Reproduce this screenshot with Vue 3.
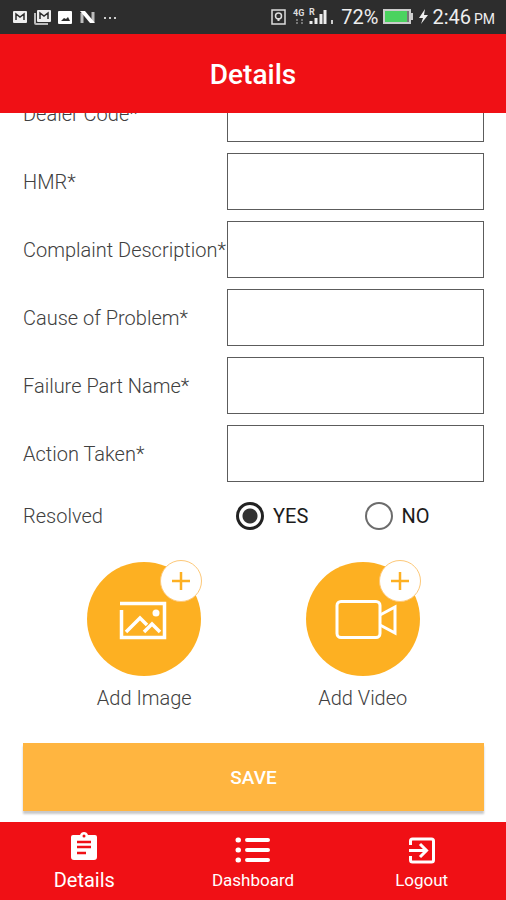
<script setup>
import { ref } from 'vue'

const fields = ref([
  { id: 'dealer-code', label: 'Dealer Code*', value: '' },
  { id: 'hmr', label: 'HMR*', value: '' },
  { id: 'complaint', label: 'Complaint Description*', value: '' },
  { id: 'cause', label: 'Cause of Problem*', value: '' },
  { id: 'part', label: 'Failure Part Name*', value: '' },
  { id: 'action', label: 'Action Taken*', value: '' }
])
const resolved = ref('YES')
</script>

<template>
  <div class="screen">
    <div class="status">
      <div class="status-left">
        <svg width="104" height="16" viewBox="0 0 104 16">
          <rect x="0" y="2" width="14" height="12" rx="1" fill="#eee" />
          <path d="M3 11V5l4 3 4-3v6" fill="none" stroke="#2d2d2d" stroke-width="1.5" />
          <path d="M21 4v10h14v2H23q-2 0-2-2z" fill="#bbb" />
          <path d="M21 4h2v10h-2z" fill="#bbb" />
          <rect x="24" y="1" width="14" height="12" rx="1" fill="#eee" />
          <path d="M27 10V4l4 3 4-3v6" fill="none" stroke="#2d2d2d" stroke-width="1.5" />
          <rect x="45" y="2" width="14" height="13" rx="1" fill="#fff" />
          <path d="M48 12l3-3 2 1 2-2 2 4z" fill="#2d2d2d" />
          <path d="M69 14V4M80 3v10" stroke="#bbb" stroke-width="3" />
          <path d="M67 2h5l10 12h-5z" fill="#fff" />
          <g fill="#ccc">
            <rect x="91" y="8" width="2" height="2" />
            <rect x="96" y="8" width="2" height="2" />
            <rect x="101" y="8" width="2" height="2" />
          </g>
        </svg>
      </div>
      <div class="status-right">
        <svg width="66" height="20" viewBox="0 0 66 20">
          <rect x="1" y="3" width="13" height="14" fill="none" stroke="#ddd" stroke-width="1.5" />
          <circle cx="7.5" cy="9" r="3" fill="none" stroke="#ddd" stroke-width="1.5" />
          <path d="M7.5 11v3" stroke="#ddd" stroke-width="2" />
          <text x="22" y="9" class="tiny">4G</text>
          <text x="38" y="8" class="tiny">R</text>
          <path d="M26 17v-5M31 17v-5" stroke="#777" stroke-width="2" stroke-dasharray="2 1" />
          <path d="M40 17v-3M45 17v-6M50 17V7M54 17V3" stroke="#eee" stroke-width="3" />
          <path d="M61 17v-4" stroke="#ccc" stroke-width="2" />
        </svg>
        <span>72%</span>
        <svg width="46" height="18" viewBox="0 0 46 18">
          <rect x="2" y="2" width="26" height="13" fill="#4bd35f" stroke="#ccc" stroke-width="2" />
          <path d="M25 3h2v11h-2z" fill="#777" />
          <path d="M28 5h3v7h-3z" fill="#ccc" />
          <path d="M43 1l-6 9h4l-2 6 7-9h-4z" fill="#eee" />
        </svg>
        <span class="clock">2:46 <small>PM</small></span>
      </div>
    </div>

    <header class="header"><h1>Details</h1></header>

    <main class="main">
      <form class="form" @submit.prevent>
        <div v-for="field in fields" :key="field.id" class="row">
          <label :for="field.id">{{ field.label }}</label>
          <input :id="field.id" v-model="field.value" class="box" type="text" />
        </div>

        <div class="row" role="radiogroup" aria-labelledby="resolved-label">
          <span id="resolved-label">Resolved</span>
          <div class="options">
            <label v-for="option in ['YES', 'NO']" :key="option" class="option">
              <input v-model="resolved" class="radio" type="radio" name="resolved" :value="option" />
              {{ option }}
            </label>
          </div>
        </div>

        <div class="media">
          <button type="button" class="add">
            <span class="disc">
              <svg width="114" height="114" viewBox="0 0 114 114" fill="none" stroke="#fff">
                <path d="M33 41.5H77.5V75.5H34.5V48" stroke-width="3.5" />
                <path d="M39 70l14-14 7 7M57 70l8-8 8 8" stroke-width="3.5" />
                <circle cx="69" cy="51" r="3.5" fill="#fff" stroke="none" />
              </svg>
              <span class="badge">
                <svg width="20" height="20" viewBox="0 0 20 20"><path d="M10 1v18M1 10h18" stroke="#fdb022" stroke-width="2.5" /></svg>
              </span>
            </span>
            Add Image
          </button>
          <button type="button" class="add">
            <span class="disc">
              <svg width="114" height="114" viewBox="0 0 114 114" fill="none" stroke="#fff" stroke-width="3">
                <rect x="31" y="39.5" width="43" height="36" rx="4" />
                <path d="M74 53l15-8v26l-15-8" />
              </svg>
              <span class="badge">
                <svg width="20" height="20" viewBox="0 0 20 20"><path d="M10 1v18M1 10h18" stroke="#fdb022" stroke-width="2.5" /></svg>
              </span>
            </span>
            Add Video
          </button>
        </div>

        <button type="submit" class="save">SAVE</button>
      </form>
    </main>

    <nav class="nav">
      <a href="#details" class="tab active" aria-current="page">
        <svg width="36" height="32" viewBox="0 0 36 32">
          <path d="M7 3h7q1-3 4-3t4 3h7q2 0 2 2v20q0 3-3 3H8q-3 0-3-3V5q0-2 2-2z" fill="#fff" />
          <circle cx="18" cy="4" r="1.5" fill="#f01015" />
          <path d="M11 10h14M11 15h14M11 21h9" stroke="#f01015" stroke-width="2.5" />
        </svg>
        Details
      </a>
      <a href="#dashboard" class="tab">
        <svg width="36" height="32" viewBox="0 0 36 32" stroke="#fff" stroke-width="5" stroke-linecap="round">
          <path d="M12 8h21M12 18h21M12 28h21" stroke-width="4" />
          <path d="M3 8h.5M3 18h.5M3 28h.5" />
        </svg>
        Dashboard
      </a>
      <a href="#logout" class="tab">
        <svg width="36" height="32" viewBox="0 0 36 32" fill="none" stroke="#fff" stroke-width="3">
          <path d="M6.5 13V9q0-2 2-2h19q2 0 2 2v19q0 2-2 2h-19q-2 0-2-2v-4" />
          <path d="M5 18.5h17M16 12l6.5 6.5L16 25" />
        </svg>
        Logout
      </a>
    </nav>
  </div>
</template>

<style>
body {
  background: #fff;
}
</style>

<style scoped>
* {
  box-sizing: border-box;
}
.screen {
  display: flex;
  flex-direction: column;
  height: 100vh;
  font-family: Roboto, "Liberation Sans", sans-serif;
  font-size: 20px;
  font-weight: 300;
  color: #404040;
  overflow: hidden;
}
svg {
  display: block;
  flex: none;
}
.status {
  display: flex;
  flex: none;
  align-items: center;
  justify-content: space-between;
  height: 34px;
  padding: 0 11px 0 13px;
  background: #2d2d2d;
  color: #eee;
  font-weight: 400;
}
.status-right {
  display: flex;
  align-items: center;
  gap: 4px;
}
.tiny {
  font-size: 9px;
  font-weight: 700;
  fill: #ddd;
}
.clock small {
  font-size: 14px;
  margin-left: -2px;
}
.header {
  display: flex;
  flex: none;
  align-items: center;
  justify-content: center;
  height: 79px;
  padding-top: 2px;
  background: #f01015;
  color: #fff;
}
h1 {
  margin: 0;
  font-size: 28px;
  font-weight: 500;
}
.main {
  display: flex;
  flex: 1;
  flex-direction: column;
  justify-content: flex-end;
  min-height: 0;
  overflow: hidden;
  padding: 0 22px 11px 23px;
}
.form {
  display: flex;
  flex: none;
  flex-direction: column;
  gap: 11px;
}
.row {
  display: grid;
  grid-template-columns: 204px 1fr;
  align-items: center;
  white-space: nowrap;
}
.box {
  width: 100%;
  min-width: 0;
  height: 57px;
  padding: 0 12px;
  border: 1px solid #5c5c5c;
  border-radius: 0;
  background: #fff;
  font: inherit;
  color: #222;
  outline: none;
}
.options {
  display: grid;
  grid-template-columns: 1fr 1fr;
  height: 46px;
  align-items: center;
}
.option {
  display: flex;
  align-items: center;
  gap: 9px;
  padding-left: 9px;
  color: #1c1c1c;
  font-weight: 400;
}
.radio {
  appearance: none;
  width: 28px;
  height: 28px;
  margin: 0;
  border: 2px solid #6c6c6c;
  border-radius: 50%;
}
.radio:checked {
  border: 3px solid #222;
  background: radial-gradient(circle, #333 7px, #fff 8px);
}
.media {
  display: grid;
  grid-template-columns: 1fr 1fr;
  padding: 12px 12px 22px;
}
.add {
  display: flex;
  flex-direction: column;
  align-items: center;
  gap: 10px;
  padding: 0;
  border: 0;
  background: none;
  font: inherit;
  line-height: 24px;
  color: inherit;
}
.disc {
  position: relative;
  width: 114px;
  height: 114px;
  border-radius: 50%;
  background: #fdb022;
}
.badge {
  position: absolute;
  top: -2px;
  right: -1px;
  display: flex;
  align-items: center;
  justify-content: center;
  width: 42px;
  height: 42px;
  border: 1px solid #fdc878;
  border-radius: 50%;
  background: #fff;
}
.save {
  height: 68px;
  border: 0;
  background: #ffb540;
  box-shadow: 0 3px 2px #c8c8c8;
  color: #fff;
  font: inherit;
  font-size: 19px;
  font-weight: 500;
}
.nav {
  display: grid;
  flex: none;
  grid-template-columns: repeat(3, 1fr);
  height: 78px;
  background: #f01015;
  font-weight: 400;
}
.tab {
  display: flex;
  flex-direction: column;
  align-items: center;
  gap: 3px;
  padding-top: 10px;
  color: #fff;
  font-size: 17px;
  line-height: 26px;
  text-decoration: none;
}
.tab.active {
  font-size: 20px;
}
</style>
